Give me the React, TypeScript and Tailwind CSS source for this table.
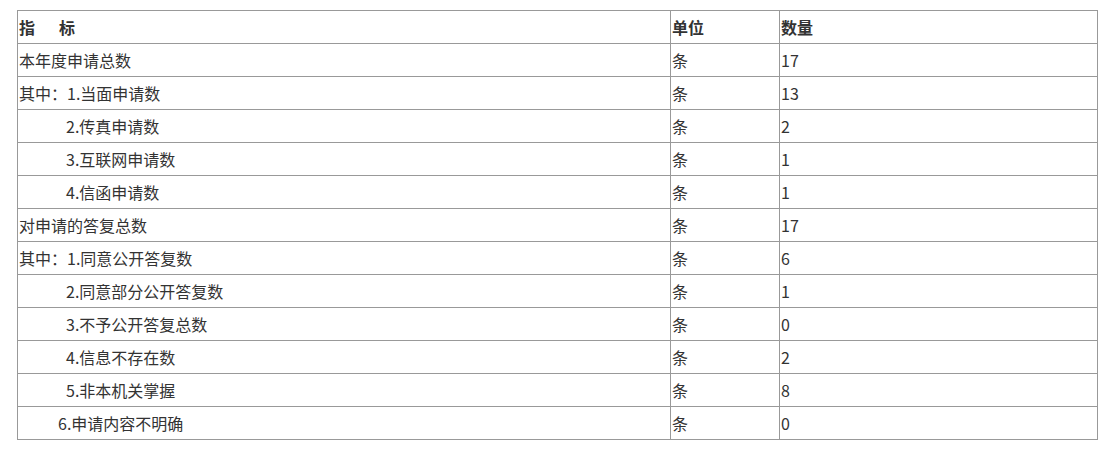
const rows: { label: string; indent: string; qty: string }[] = [
  { label: '本年度申请总数', indent: 'pl-px', qty: '17' },
  { label: '其中：1.当面申请数', indent: 'pl-px', qty: '13' },
  { label: '2.传真申请数', indent: 'pl-[48px]', qty: '2' },
  { label: '3.互联网申请数', indent: 'pl-[48px]', qty: '1' },
  { label: '4.信函申请数', indent: 'pl-[48px]', qty: '1' },
  { label: '对申请的答复总数', indent: 'pl-px', qty: '17' },
  { label: '其中：1.同意公开答复数', indent: 'pl-px', qty: '6' },
  { label: '2.同意部分公开答复数', indent: 'pl-[48px]', qty: '1' },
  { label: '3.不予公开答复总数', indent: 'pl-[48px]', qty: '0' },
  { label: '4.信息不存在数', indent: 'pl-[48px]', qty: '2' },
  { label: '5.非本机关掌握', indent: 'pl-[48px]', qty: '8' },
  { label: '6.申请内容不明确', indent: 'pl-[40px]', qty: '0' },
];

export default function App() {
  return (
    <main className="min-h-[450px] bg-white pt-[10px] pl-[17px] text-[16px] text-[#333] [font-family:'Microsoft_YaHei','Noto_Sans_CJK_SC',sans-serif]">
      <table className="w-[1080px] table-fixed border-collapse">
        <colgroup>
          <col className="w-[653px]" />
          <col className="w-[109px]" />
          <col className="w-[318px]" />
        </colgroup>
        <thead>
          <tr className="h-[33px] font-bold">
            <td className="border border-[#999] p-0 pl-px">
              指<span className="inline-block w-[24px]" />标
            </td>
            <td className="border border-[#999] p-0 pl-px">单位</td>
            <td className="border border-[#999] p-0 pl-px">数量</td>
          </tr>
        </thead>
        <tbody>
          {rows.map((row, idx) => (
            <tr key={idx} className="h-[33px]">
              <td className={`border border-[#999] p-0 ${row.indent}`}>{row.label}</td>
              <td className="border border-[#999] p-0 pl-px">条</td>
              <td className="border border-[#999] p-0 pl-px">{row.qty}</td>
            </tr>
          ))}
        </tbody>
      </table>
    </main>
  );
}
